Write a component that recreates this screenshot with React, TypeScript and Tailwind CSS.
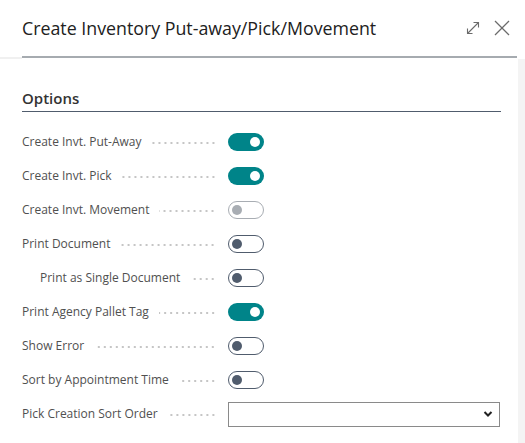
import React from "react";

type Row =
  | { kind: "toggle"; label: string; state: "on" | "off" | "disabled"; indent?: boolean }
  | { kind: "select"; label: string };

const rows: Row[] = [
  { kind: "toggle", label: "Create Invt. Put-Away", state: "on" },
  { kind: "toggle", label: "Create Invt. Pick", state: "on" },
  { kind: "toggle", label: "Create Invt. Movement", state: "disabled" },
  { kind: "toggle", label: "Print Document", state: "off" },
  { kind: "toggle", label: "Print as Single Document", state: "off", indent: true },
  { kind: "toggle", label: "Print Agency Pallet Tag", state: "on" },
  { kind: "toggle", label: "Show Error", state: "off" },
  { kind: "toggle", label: "Sort by Appointment Time", state: "off" },
  { kind: "select", label: "Pick Creation Sort Order" },
];

function Toggle({ state }: { state: "on" | "off" | "disabled" }) {
  if (state === "on") {
    return (
      <div className="w-[36px] h-[18px] rounded-full bg-[#008489] flex items-center justify-end pr-[4px]">
        <div className="w-[10px] h-[10px] rounded-full bg-white" />
      </div>
    );
  }
  if (state === "disabled") {
    return (
      <div className="w-[36px] h-[18px] rounded-full border border-[#a8adb3] bg-white flex items-center pl-[3px]">
        <div className="w-[10px] h-[10px] rounded-full bg-[#a8adb3]" />
      </div>
    );
  }
  return (
    <div className="w-[36px] h-[18px] rounded-full border border-[#505c6d] bg-white flex items-center pl-[3px]">
      <div className="w-[10px] h-[10px] rounded-full bg-[#505c6d]" />
    </div>
  );
}

export default function App() {
  return (
    <div
      className="w-[525px] h-[443px] bg-white overflow-hidden flex flex-col"
      style={{ fontFamily: '"Open Sans", "Noto Sans", sans-serif' }}
    >
      {/* Header */}
      <div className="h-[56px] flex items-center pl-[22px] pr-[14px]">
        <div className="flex-1 text-[17.8px] text-[#212121]">
          Create Inventory Put-away/Pick/Movement
        </div>
        <div className="flex items-center gap-[12px]">
          <svg width="16" height="16" viewBox="0 0 16 16" fill="none" stroke="#6b6b6b" strokeWidth="1.1">
            <path d="M2.5 13.5 L13.5 2.5" />
            <path d="M8.5 2.5 H13.5 V7.5" />
            <path d="M2.5 8.5 V13.5 H7.5" />
          </svg>
          <svg width="18" height="18" viewBox="0 0 18 18" fill="none" stroke="#6b6b6b" strokeWidth="1.3">
            <path d="M2 2 L16 16" />
            <path d="M16 2 L2 16" />
          </svg>
        </div>
      </div>
      <div className="flex">
        <div className="w-[22px] h-[2px] mt-[1px] bg-[#f0f0f0]" />
        <div className="w-[495px] h-[2px] bg-[#a6abb0]" />
      </div>

      {/* Body */}
      <div className="flex-1 flex">
        <div className="flex-1 pl-[22px] pr-[17px] pt-[29px]">
          <div className="text-[15px] font-semibold text-[#333] pb-[3px] border-b border-[#505c6d] leading-[20px]">
            Options
          </div>
          <div className="flex flex-col mt-[13px]">
            {rows.map((r) => (
              <div key={r.label} className="h-[34px] flex items-center">
                <div className="w-[206px] flex items-center pr-[12px]">
                  <span
                    className={`text-[12px] text-[#505050] whitespace-nowrap ${
                      r.kind === "toggle" && r.indent ? "pl-[18px]" : ""
                    }`}
                  >
                    {r.label}
                  </span>
                  <div className="flex-1 ml-[10px] h-[2px] mt-[2px] bg-[radial-gradient(circle,#c4c4c4_0.7px,transparent_1px)] bg-[length:6px_2px] bg-repeat-x bg-right" />
                </div>
                {r.kind === "toggle" ? (
                  <Toggle state={r.state} />
                ) : (
                  <div className="w-[272px] h-[25px] border border-[#8a8a8a] flex items-center justify-end pr-[6px]">
                    <svg width="10" height="8" viewBox="0 0 10 8" fill="none" stroke="#212121" strokeWidth="2">
                      <path d="M1.5 2 L5 5.5 L8.5 2" />
                    </svg>
                  </div>
                )}
              </div>
            ))}
          </div>
        </div>
        <div className="w-[7px] bg-[#f4f4f4]" />
      </div>
    </div>
  );
}
